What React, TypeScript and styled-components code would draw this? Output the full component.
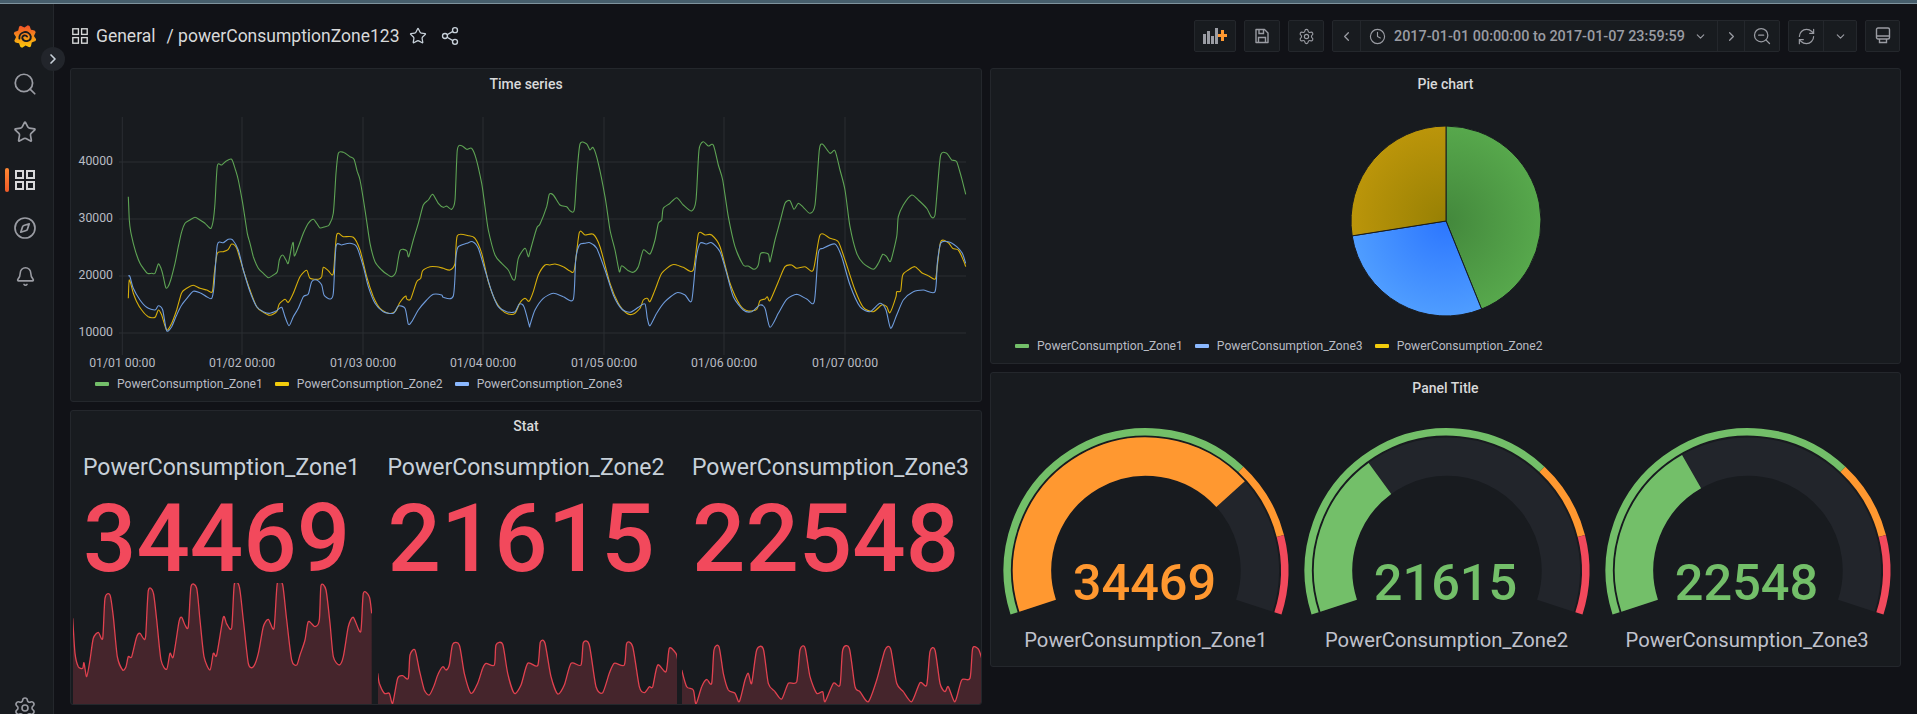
import React from "react";
import styled, { createGlobalStyle } from "styled-components";
import {
  Bell,
  ChevronDown,
  ChevronLeft,
  ChevronRight,
  Clock,
  Compass,
  RefreshCw,
  Search,
  Settings,
  Share2,
  Star,
  ZoomOut,
} from "lucide-react";

const colors = {
  page: "#111217",
  panel: "#181b1f",
  border: "#24272c",
  text: "#c7d0d9",
  title: "#d8d9da",
  icon: "#9a9ca3",
  green: "#73bf69",
  yellow: "#f2cc0c",
  blue: "#8ab8ff",
  red: "#f2495c",
  orange: "#ff9830",
  track: "#22252b",
};

// traced series, in 3x crop coordinates
const greenA = [205,290,208,360,212,395,220,430,230,465,240,490,250,505,262,520,275,520,285,520,295,492,303,505,310,530,317,562,323,562,332,540,345,490,355,440,365,395,375,370,390,360,405,352,420,360,435,370,445,380,453,385,460,360,465,310,472,198,485,195,500,182,515,178,525,205,535,240,548,310,562,400,570,430,580,470,595,505,610,520,625,533,640,525,652,515,658,480,668,465,678,480,685,490,695,440,700,428,703,468,715,440,730,400,745,370,760,358,770,370,780,384,795,380,808,374,820,340,828,220,835,160,850,157,870,170,882,178,892,215,900,240,915,330,930,430,945,485,965,510,980,522,995,530,1008,515,1020,452,1040,452,1046,470,1060,420,1075,370,1090,315,1105,300,1118,283,1135,310,1150,322,1160,318,1175,328,1185,300,1192,150,1205,137,1220,148,1235,145,1248,175,1265,250,1275,320,1285,390,1305,465,1325,490,1345,510,1358,538,1366,535,1375,475,1395,445,1405,470];
const greenB = [0,455,20,385,30,372,50,320,58,283,70,285,90,315,110,320,120,332,133,330,140,230,150,132,170,132,180,150,190,143,205,190,225,290,240,390,255,450,268,515,275,497,295,512,310,517,325,500,340,450,360,462,375,420,385,370,395,360,400,325,420,310,440,293,460,315,485,333,498,300,507,150,520,125,535,138,550,135,565,195,578,240,595,350,615,440,640,495,655,498,672,508,685,495,692,460,715,462,720,485,735,420,750,365,765,310,780,302,792,328,805,310,820,322,840,340,855,315,868,150,878,133,900,160,915,152,930,210,945,270,960,380,980,460,1000,490,1030,508,1045,490,1058,463,1070,470,1082,483,1100,410,1105,350,1120,315,1145,285,1165,300,1190,325,1205,352,1215,345,1222,270,1232,165,1250,160,1265,180,1280,185,1295,235,1307,283];
const yellowA = [205,595,208,540,220,580,230,605,245,630,265,650,285,652,295,630,305,645,320,690,335,670,350,630,365,578,380,565,400,556,420,565,440,570,457,575,463,520,472,460,490,455,505,448,515,432,530,445,550,510,570,570,590,620,610,637,630,646,650,635,658,612,675,598,685,607,700,580,720,530,740,511,750,535,775,538,785,530,790,502,805,512,820,520,830,405,850,410,880,412,900,450,920,530,940,590,960,625,985,640,1005,635,1020,607,1037,588,1040,597,1052,597,1070,545,1082,535,1088,512,1110,500,1130,500,1150,505,1170,510,1185,490,1192,407,1225,407,1245,415,1265,460,1285,545,1305,600,1325,630,1345,642,1365,640,1380,608,1395,595,1405,604];
const yellowB = [0,600,10,575,25,525,45,495,60,495,75,492,100,500,120,513,133,510,148,398,165,405,190,403,210,440,240,550,265,610,290,640,310,642,330,625,340,600,352,595,360,605,375,570,395,520,425,495,440,495,460,502,490,510,505,402,525,405,545,405,570,440,600,550,630,615,655,633,680,628,690,602,705,597,712,590,720,602,745,545,765,500,785,495,800,505,825,500,850,510,870,405,900,415,925,425,945,480,975,570,1000,622,1030,635,1055,615,1070,620,1080,638,1098,590,1100,575,1112,572,1118,525,1135,510,1155,500,1175,518,1195,527,1215,538,1220,515,1232,425,1255,428,1268,445,1285,450,1300,480,1307,500];
const blueA = [205,527,210,530,220,565,240,600,260,622,285,630,295,617,308,630,320,692,335,680,350,645,365,615,385,590,400,574,420,578,440,590,455,595,462,560,472,435,490,428,505,418,518,420,535,450,550,510,570,575,590,620,610,635,630,640,650,632,665,622,675,650,687,677,700,650,715,625,730,590,745,582,755,545,770,540,785,555,792,585,810,597,820,580,828,440,845,435,870,430,890,440,910,500,925,560,945,610,970,635,1000,640,1015,618,1035,625,1045,672,1055,665,1075,630,1100,600,1120,583,1145,585,1150,592,1180,588,1188,470,1195,440,1220,430,1238,425,1255,445,1275,510,1295,575,1315,620,1340,635,1365,635,1378,612,1392,620,1408,677];
const blueB = [0,675,15,630,40,595,70,580,100,590,130,598,137,480,148,435,165,430,180,428,200,445,225,510,250,585,275,627,300,637,325,622,345,612,352,655,360,677,380,640,405,605,440,578,465,585,485,602,498,480,510,430,530,432,545,428,570,455,590,520,610,590,640,630,665,635,690,615,705,625,720,682,745,640,770,598,800,583,830,597,853,605,865,460,880,445,915,432,935,470,960,555,990,620,1020,635,1050,610,1068,630,1082,685,1100,645,1120,600,1150,575,1180,570,1215,575,1222,490,1232,430,1255,425,1280,440,1297,460,1307,490];

const sparkOne = [218,655,225,760,235,800,248,805,252,788,260,830,270,780,280,715,295,697,308,715,315,595,330,585,340,650,352,770,368,810,378,800,385,770,395,770,410,710,420,700,430,715,437,708,445,572,460,578,470,660,483,780,500,808,510,760,520,770,537,665,545,652,555,675,565,680,573,560,590,565,600,660,612,770,630,810,640,760,650,765,670,652,680,672,695,683,703,553,718,560,730,660,745,790,760,800,775,760,790,680,805,658,822,685,832,550,848,555,860,660,875,780,890,795,900,765,915,720,925,665,945,680,958,660,963,557,978,570,990,670,1000,770,1018,795,1030,770,1045,680,1060,652,1082,695,1090,580,1108,590,1115,640];
const sparkTwo = [1130,820,1135,850,1150,880,1165,880,1175,910,1190,835,1205,827,1222,835,1227,765,1242,750,1255,810,1270,870,1285,885,1300,855,1310,825,1325,800,1335,810,1345,795,1355,733,1375,735,1390,820,1410,880,1430,850,1445,805,1455,790,1480,795,1485,735,1505,733,1520,820,1540,880,1560,855,1580,790,1610,797,1618,727,1632,730,1650,830,1670,882,1690,855,1710,790,1740,795,1747,728,1765,735,1785,860,1805,878,1825,820,1840,790,1870,795,1877,730,1895,740,1915,860,1930,878,1945,860,1955,860,1970,795,1995,815,2005,745,2025,760,2030,780];
const sparkThree = [605,810,620,860,640,870,648,912,665,860,680,838,695,850,702,750,717,740,730,820,745,870,765,880,778,905,795,840,805,820,815,850,830,750,850,747,865,850,885,875,905,897,925,850,950,845,960,750,975,743,990,830,1010,880,1028,875,1035,905,1060,850,1080,855,1088,750,1108,745,1125,860,1140,875,1165,905,1190,840,1215,750,1232,747,1250,850,1270,875,1295,905,1320,848,1340,855,1350,755,1365,750,1380,850,1395,875,1405,860,1425,905,1445,840,1470,835,1478,745,1495,747,1505,775];

type Pt = [number, number];

const toPoints = (data: number[], ox: number, oy: number) => {
  const out: Pt[] = [];
  for (let i = 0; i < data.length; i += 2) {
    out.push([data[i] / 3 + ox, data[i + 1] / 3 + oy]);
  }
  return out;
};

// catmull-rom through the traced points, the raw polyline looks too spiky
const smoothLine = (pts: Pt[]) => {
  const f = (n: number) => n.toFixed(1);
  let d = `M${f(pts[0][0])} ${f(pts[0][1])}`;
  for (let i = 0; i < pts.length - 1; i++) {
    const p0 = pts[Math.max(i - 1, 0)];
    const p1 = pts[i];
    const p2 = pts[i + 1];
    const p3 = pts[Math.min(i + 2, pts.length - 1)];
    d += ` C${f(p1[0] + (p2[0] - p0[0]) / 8)} ${f(p1[1] + (p2[1] - p0[1]) / 8)} ${f(p2[0] - (p3[0] - p1[0]) / 8)} ${f(p2[1] - (p3[1] - p1[1]) / 8)} ${f(p2[0])} ${f(p2[1])}`;
  }
  return d;
};

const seriesPath = (a: number[], b: number[]) =>
  smoothLine([...toPoints(a, -11, 0), ...toPoints(b, 459, 0)]);

const series = [
  { color: "#5ea354", d: seriesPath(greenA, greenB) },
  { color: "#d6ae0b", d: seriesPath(yellowA, yellowB) },
  { color: "#6f9cdc", d: seriesPath(blueA, blueB) },
];

const gridX = [51.3, 171, 292, 412, 533, 653, 774];
const dayLabels = ["01/01 00:00", "01/02 00:00", "01/03 00:00", "01/04 00:00", "01/05 00:00", "01/06 00:00", "01/07 00:00"];
const gridY = [
  { y: 62, label: "40000" },
  { y: 119, label: "30000" },
  { y: 176, label: "20000" },
  { y: 233, label: "10000" },
];

const stats = [
  { name: "PowerConsumption_Zone1", value: "34469", spark: sparkOne, ox: -73 },
  { name: "PowerConsumption_Zone2", value: "21615", spark: sparkTwo, ox: -377 },
  { name: "PowerConsumption_Zone3", value: "22548", spark: sparkThree, ox: -202 },
];

const gauges = [
  { name: "PowerConsumption_Zone1", value: "34469", fraction: 0.722, color: colors.orange },
  { name: "PowerConsumption_Zone2", value: "21615", fraction: 0.333, color: colors.green },
  { name: "PowerConsumption_Zone3", value: "22548", fraction: 0.3625, color: colors.green },
];

const polar = (cx: number, cy: number, r: number, deg: number) => {
  const rad = (deg * Math.PI) / 180;
  return `${(cx + r * Math.cos(rad)).toFixed(2)} ${(cy - r * Math.sin(rad)).toFixed(2)}`;
};

// fractions run along the 216 degree sweep of the gauge
const gaugeArc = (cx: number, cy: number, r: number, from: number, to: number) => {
  const a = 198 - 216 * from;
  const b = 198 - 216 * to;
  return `M${polar(cx, cy, r, a)} A${r} ${r} 0 ${a - b > 180 ? 1 : 0} 1 ${polar(cx, cy, r, b)}`;
};

const pieSlice = (cx: number, cy: number, r: number, from: number, to: number) => {
  const a = 90 - from;
  const b = 90 - to;
  return `M${cx} ${cy} L${polar(cx, cy, r, a)} A${r} ${r} 0 ${to - from > 180 ? 1 : 0} 1 ${polar(cx, cy, r, b)} Z`;
};

const GlobalStyle = createGlobalStyle`
  html, body {
    margin: 0;
    height: 100%;
    overflow: hidden;
    background: ${colors.page};
  }
  body {
    font-family: Roboto, "Liberation Sans", sans-serif;
    color: ${colors.text};
  }
  * {
    box-sizing: border-box;
  }
`;

const Page = styled.div`
  height: 714px;
  overflow: hidden;
  display: flex;
  flex-direction: column;
`;

const TopStrip = styled.div`
  height: 4px;
  flex: none;
  background: #475e6c;
  border-bottom: 1px solid #7f939e;
`;

const Body = styled.div`
  flex: 1;
  display: flex;
  min-height: 0;
`;

const Sidebar = styled.nav`
  position: relative;
  width: 54px;
  flex: none;
  padding-top: 8px;
  background: ${colors.panel};
  border-right: 1px solid ${colors.border};
  display: flex;
  flex-direction: column;
`;

const NavItem = styled.div<{ $active?: boolean; $bottom?: boolean }>`
  position: relative;
  height: 48px;
  flex: none;
  display: flex;
  align-items: center;
  justify-content: center;
  padding-right: 3px;
  color: ${(p) => (p.$active ? "#d8d9da" : colors.icon)};
  margin-top: ${(p) => (p.$bottom ? "384px" : "0")};

  ${(p) =>
    p.$active &&
    `&::before {
      content: "";
      position: absolute;
      left: 5px;
      top: 12px;
      width: 4px;
      height: 24px;
      border-radius: 2px;
      background: linear-gradient(180deg, #ff8833, #f05a28);
    }`}
`;

const ToggleButton = styled.div`
  position: absolute;
  left: 41px;
  top: 43px;
  width: 24px;
  height: 24px;
  border-radius: 50%;
  background: ${colors.track};
  color: #c7d0d9;
  display: flex;
  align-items: center;
  justify-content: center;
  z-index: 2;
`;

const Main = styled.main`
  flex: 1;
  min-width: 0;
  padding: 0 16px;
`;

const Header = styled.header`
  height: 64px;
  display: flex;
  align-items: center;
  justify-content: space-between;
`;

const Breadcrumb = styled.div`
  display: flex;
  align-items: center;
  padding-left: 2px;
  color: ${colors.title};
  font-size: 17.5px;
`;

const CrumbFolder = styled.span`
  margin-left: 8px;
`;

const CrumbName = styled.span`
  margin-left: 11px;
`;

const CrumbIcon = styled.span<{ $gap: number }>`
  display: flex;
  margin-left: ${(p) => p.$gap}px;
  color: #c7d0d9;
`;

const Toolbar = styled.div`
  display: flex;
  gap: 8px;
  margin-right: 1px;
`;

const ToolGroup = styled.div`
  display: flex;
  height: 32px;
  background: ${colors.panel};
  border: 1px solid ${colors.border};
  border-radius: 2px;
`;

const ToolSegment = styled.div<{ $width?: number }>`
  width: ${(p) => (p.$width ? `${p.$width}px` : "auto")};
  display: flex;
  align-items: center;
  justify-content: center;
  color: ${colors.icon};

  & + & {
    border-left: 1px solid ${colors.border};
  }
`;

const RangeSegment = styled(ToolSegment)`
  gap: 8px;
  justify-content: flex-start;
  padding-left: 8px;
`;

const RangeText = styled.span`
  width: 292px;
  font-size: 14.4px;
  font-weight: 500;
  white-space: nowrap;
`;

const Dashboard = styled.div`
  display: grid;
  grid-template-columns: 912px 911px;
  column-gap: 8px;
`;

const Column = styled.div<{ $gap: number }>`
  display: flex;
  flex-direction: column;
  gap: ${(p) => p.$gap}px;
`;

const Panel = styled.section<{ $height: number }>`
  height: ${(p) => p.$height}px;
  background: ${colors.panel};
  border: 1px solid ${colors.border};
  border-radius: 3px;
  display: flex;
  flex-direction: column;
  overflow: hidden;
`;

const PanelTitle = styled.h2`
  height: 31px;
  flex: none;
  margin: 0;
  font-size: 14px;
  font-weight: 500;
  line-height: 31px;
  text-align: center;
  color: ${colors.title};
`;

const ChartSvg = styled.svg`
  display: block;
  flex: none;
`;

const AxisText = styled.text`
  font-size: 12.25px;
  fill: #b9bcc4;
`;

const LegendRow = styled.div`
  height: 24px;
  flex: none;
  padding-left: 24px;
  display: flex;
  align-items: center;
  gap: 12px;
`;

const LegendItem = styled.div`
  display: flex;
  align-items: center;
  gap: 8px;
  font-size: 12.12px;
  color: #b9bcc4;
`;

const Swatch = styled.i<{ $color: string }>`
  width: 14px;
  height: 4px;
  background: ${(p) => p.$color};
  border-radius: 1px;
`;

const StatGrid = styled.div`
  flex: 1;
  min-height: 0;
  padding-left: 2px;
  display: grid;
  grid-template-columns: repeat(3, 1fr);
  column-gap: 5.5px;
`;

const StatCell = styled.div`
  display: flex;
  flex-direction: column;
  min-width: 0;
`;

const StatName = styled.div`
  margin-top: 12px;
  padding-left: 10px;
  font-size: 23px;
  line-height: 28px;
  white-space: nowrap;
  color: #c7d0d9;
`;

const StatValue = styled.div`
  margin-top: 13px;
  padding-left: 10px;
  font-size: 94px;
  font-weight: 500;
  line-height: 88px;
  color: ${colors.red};
`;

const SparkSvg = styled.svg`
  display: block;
  flex: 1;
  min-height: 0;
  width: 100%;
`;

const GaugeRow = styled.div`
  flex: 1;
  padding: 0 2px 0 5px;
  display: grid;
  grid-template-columns: repeat(3, 1fr);
`;

const GaugeCell = styled.div`
  display: flex;
  flex-direction: column;
  align-items: center;
`;

const GaugeValue = styled.text`
  font-size: 50.5px;
  font-weight: 500;
  text-anchor: middle;
`;

const GaugeName = styled.div`
  font-size: 20.2px;
  line-height: 28px;
  white-space: nowrap;
  color: #c0c2cc;
  transform: translateX(-0.5px);
`;

const GridIcon = ({ size, width }: { size: number; width: number }) => (
  <svg width={size} height={size} viewBox="0 0 20 20" fill="none" stroke="currentColor" strokeWidth={width}>
    <rect x="1" y="1" width="7" height="7" />
    <rect x="12" y="1" width="7" height="7" />
    <rect x="1" y="12" width="7" height="7" />
    <rect x="12" y="12" width="7" height="7" />
  </svg>
);

const gearPoints = () => {
  const pts: string[] = [];
  for (let i = 0; i < 40; i++) {
    const phase = i % 5;
    const r = phase === 0 || phase === 1 ? 11.5 : phase === 3 ? 9 : 10;
    const a = (i / 40) * Math.PI * 2 + 0.25;
    pts.push(`${(12 + r * Math.cos(a)).toFixed(2)},${(12.5 + r * Math.sin(a)).toFixed(2)}`);
  }
  return pts.join(" ");
};

const Logo = () => (
  <svg width="24" height="24" viewBox="0 0 24 24">
    <defs>
      <linearGradient id="logoFill" x1="0" y1="0" x2="0" y2="1">
        <stop offset="0" stopColor="#f0512a" />
        <stop offset="1" stopColor="#fbca0a" />
      </linearGradient>
    </defs>
    <polygon points={gearPoints()} fill="url(#logoFill)" />
    <path
      d="M6.4 14.5 A5.8 5.8 0 0 1 17.8 12.5 A4.4 4.4 0 0 1 9.2 14 A2.6 2.6 0 0 1 14 12.6"
      fill="none"
      stroke={colors.panel}
      strokeWidth="1.9"
      strokeLinecap="round"
    />
  </svg>
);

const AddPanelIcon = () => (
  <svg width="24" height="18" viewBox="0 0 24 18">
    <g fill={colors.icon}>
      <rect x="0" y="7" width="3" height="10" />
      <rect x="4" y="4" width="3" height="13" />
      <rect x="8" y="9" width="3" height="8" />
      <rect x="12" y="1" width="3" height="16" />
    </g>
    <path d="M18 3h3v4h3v3h-3v4h-3v-4h-3V7h3z" fill="#ff9830" />
  </svg>
);

const SaveIcon = () => (
  <svg width="16" height="16" viewBox="0 0 16 16" fill="none" stroke="currentColor" strokeWidth="1.4">
    <path d="M2 1.5h8.5L14 5v9.5H2z" strokeLinejoin="round" />
    <path d="M5 1.5v4h4.5v-4M4.5 14.5v-5h7v5" />
  </svg>
);

const TvIcon = () => (
  <svg width="16" height="18" viewBox="0 0 16 18" fill="none" stroke="currentColor" strokeWidth="1.4">
    <rect x="1.5" y="1" width="13" height="11" rx="1.5" />
    <path d="M1.5 9h13M4.5 12v3.5h7V12" />
  </svg>
);

const App = () => (
  <Page>
    <GlobalStyle />
    <TopStrip />
    <Body>
      <Sidebar>
        <NavItem>
          <Logo />
        </NavItem>
        <NavItem>
          <Search size={26} strokeWidth={1.6} />
        </NavItem>
        <NavItem>
          <Star size={24} strokeWidth={1.7} />
        </NavItem>
        <NavItem $active>
          <GridIcon size={20} width={2} />
        </NavItem>
        <NavItem>
          <Compass size={24} strokeWidth={1.7} />
        </NavItem>
        <NavItem>
          <Bell size={21} strokeWidth={1.8} />
        </NavItem>
        <NavItem $bottom>
          <Settings size={24} strokeWidth={1.6} />
        </NavItem>
        <ToggleButton>
          <ChevronRight size={16} strokeWidth={2.5} />
        </ToggleButton>
      </Sidebar>
      <Main>
        <Header>
          <Breadcrumb>
            <GridIcon size={16} width={1.7} />
            <CrumbFolder>General</CrumbFolder>
            <CrumbName>/ powerConsumptionZone123</CrumbName>
            <CrumbIcon $gap={9}>
              <Star size={18} strokeWidth={1.7} />
            </CrumbIcon>
            <CrumbIcon $gap={13}>
              <Share2 size={20} strokeWidth={1.6} />
            </CrumbIcon>
          </Breadcrumb>
          <Toolbar>
            <ToolGroup>
              <ToolSegment $width={40}>
                <AddPanelIcon />
              </ToolSegment>
            </ToolGroup>
            <ToolGroup>
              <ToolSegment $width={34}>
                <SaveIcon />
              </ToolSegment>
            </ToolGroup>
            <ToolGroup>
              <ToolSegment $width={34}>
                <Settings size={17} strokeWidth={1.6} />
              </ToolSegment>
            </ToolGroup>
            <ToolGroup>
              <ToolSegment $width={27}>
                <ChevronLeft size={15} />
              </ToolSegment>
              <RangeSegment $width={357}>
                <Clock size={17} strokeWidth={1.6} />
                <RangeText>2017-01-01 00:00:00 to 2017-01-07 23:59:59</RangeText>
                <ChevronDown size={13} />
              </RangeSegment>
              <ToolSegment $width={27}>
                <ChevronRight size={15} />
              </ToolSegment>
              <ToolSegment $width={35}>
                <ZoomOut size={20} strokeWidth={1.5} />
              </ToolSegment>
            </ToolGroup>
            <ToolGroup>
              <ToolSegment $width={34}>
                <RefreshCw size={19} strokeWidth={1.5} />
              </ToolSegment>
              <ToolSegment $width={33}>
                <ChevronDown size={13} />
              </ToolSegment>
            </ToolGroup>
            <ToolGroup>
              <ToolSegment $width={33}>
                <TvIcon />
              </ToolSegment>
            </ToolGroup>
          </Toolbar>
        </Header>
        <Dashboard>
          <Column $gap={8}>
            <Panel $height={334}>
              <PanelTitle>Time series</PanelTitle>
              <ChartSvg width={910} height={272}>
                {gridX.map((x) => (
                  <line key={x} x1={x} x2={x} y1={17} y2={255} stroke="#2b2e33" />
                ))}
                {gridY.map((g) => (
                  <React.Fragment key={g.y}>
                    <line x1={48} x2={895} y1={g.y} y2={g.y} stroke="#2b2e33" />
                    <AxisText x={42} y={g.y + 3} textAnchor="end">
                      {g.label}
                    </AxisText>
                  </React.Fragment>
                ))}
                {gridX.map((x, i) => (
                  <AxisText key={dayLabels[i]} x={x} y={267} textAnchor="middle">
                    {dayLabels[i]}
                  </AxisText>
                ))}
                {series.map((s) => (
                  <path key={s.color} d={s.d} fill="none" stroke={s.color} strokeWidth={1.1} strokeLinejoin="round" />
                ))}
              </ChartSvg>
              <LegendRow>
                <LegendItem>
                  <Swatch $color={colors.green} />
                  PowerConsumption_Zone1
                </LegendItem>
                <LegendItem>
                  <Swatch $color={colors.yellow} />
                  PowerConsumption_Zone2
                </LegendItem>
                <LegendItem>
                  <Swatch $color={colors.blue} />
                  PowerConsumption_Zone3
                </LegendItem>
              </LegendRow>
            </Panel>
            <Panel $height={295}>
              <PanelTitle>Stat</PanelTitle>
              <StatGrid>
                {stats.map((s) => {
                  const pts = toPoints(s.spark, s.ox, -183);
                  const first = pts[0][0].toFixed(1);
                  const last = pts[pts.length - 1][0].toFixed(1);
                  const line = smoothLine(pts);
                  return (
                    <StatCell key={s.name}>
                      <StatName>{s.name}</StatName>
                      <StatValue>{s.value}</StatValue>
                      <SparkSvg>
                        <path d={`${line} L${last} 125 L${first} 125 Z`} fill="#45252c" />
                        <path d={line} fill="none" stroke="#e0414f" strokeWidth={1.3} strokeLinejoin="round" />
                      </SparkSvg>
                    </StatCell>
                  );
                })}
              </StatGrid>
            </Panel>
          </Column>
          <Column $gap={8}>
            <Panel $height={296}>
              <PanelTitle>Pie chart</PanelTitle>
              <ChartSvg width={909} height={234}>
                <defs>
                  <radialGradient id="pieGreen" gradientUnits="userSpaceOnUse" cx="455" cy="121" r="95">
                    <stop offset="0" stopColor="#43883c" />
                    <stop offset="1" stopColor="#57a84c" />
                  </radialGradient>
                  <radialGradient id="pieBlue" gradientUnits="userSpaceOnUse" cx="455" cy="121" r="95">
                    <stop offset="0" stopColor="#2c76ff" />
                    <stop offset="1" stopColor="#4f9dff" />
                  </radialGradient>
                  <radialGradient id="pieYellow" gradientUnits="userSpaceOnUse" cx="455" cy="121" r="95">
                    <stop offset="0" stopColor="#978004" />
                    <stop offset="1" stopColor="#bb950a" />
                  </radialGradient>
                </defs>
                <path d={pieSlice(455, 121, 95, 0, 158)} fill="url(#pieGreen)" stroke={colors.panel} strokeWidth={1} />
                <path d={pieSlice(455, 121, 95, 158, 261)} fill="url(#pieBlue)" stroke={colors.panel} strokeWidth={1} />
                <path d={pieSlice(455, 121, 95, 261, 360)} fill="url(#pieYellow)" stroke={colors.panel} strokeWidth={1} />
              </ChartSvg>
              <LegendRow>
                <LegendItem>
                  <Swatch $color={colors.green} />
                  PowerConsumption_Zone1
                </LegendItem>
                <LegendItem>
                  <Swatch $color={colors.blue} />
                  PowerConsumption_Zone3
                </LegendItem>
                <LegendItem>
                  <Swatch $color={colors.yellow} />
                  PowerConsumption_Zone2
                </LegendItem>
              </LegendRow>
            </Panel>
            <Panel $height={295}>
              <PanelTitle>Panel Title</PanelTitle>
              <GaugeRow>
                {gauges.map((g) => (
                  <GaugeCell key={g.name}>
                    <ChartSvg width={300} height={222}>
                      <path d={gaugeArc(150, 166.5, 138.7, 0, 0.7)} fill="none" stroke={colors.green} strokeWidth={7.5} />
                      <path d={gaugeArc(150, 166.5, 138.7, 0.7, 0.85)} fill="none" stroke={colors.orange} strokeWidth={7.5} />
                      <path d={gaugeArc(150, 166.5, 138.7, 0.85, 1)} fill="none" stroke={colors.red} strokeWidth={7.5} />
                      <path d={gaugeArc(150, 166.5, 113.9, 0, 1)} fill="none" stroke={colors.track} strokeWidth={38.4} />
                      <path d={gaugeArc(150, 166.5, 113.9, 0, g.fraction)} fill="none" stroke={g.color} strokeWidth={38.4} />
                      <GaugeValue x={148.5} y={196} fill={g.color}>
                        {g.value}
                      </GaugeValue>
                    </ChartSvg>
                    <GaugeName>{g.name}</GaugeName>
                  </GaugeCell>
                ))}
              </GaugeRow>
            </Panel>
          </Column>
        </Dashboard>
      </Main>
    </Body>
  </Page>
);

export default App;
